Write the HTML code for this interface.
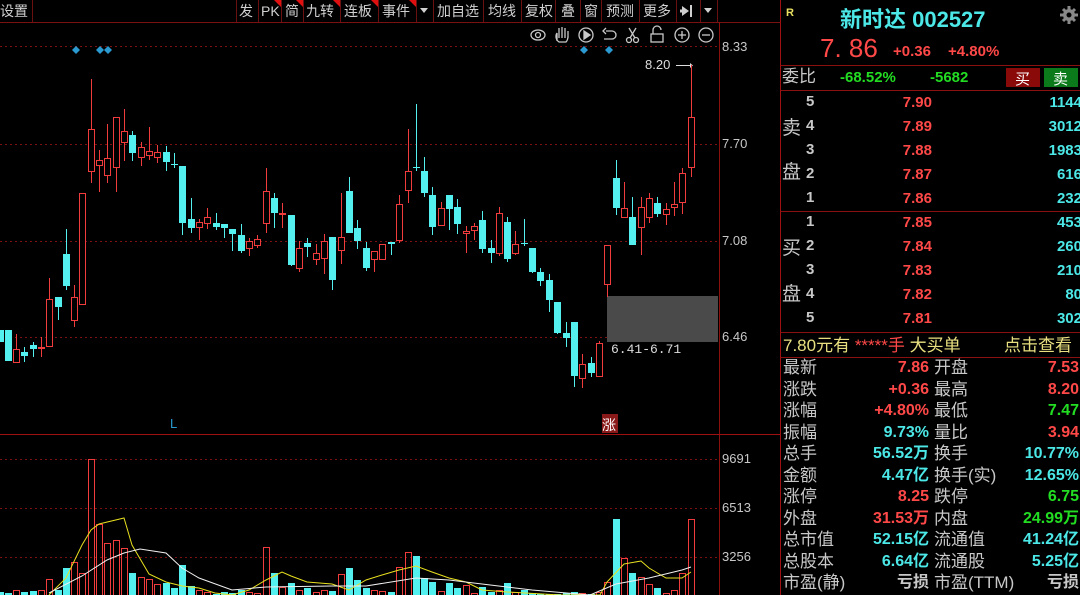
<!DOCTYPE html>
<html><head><meta charset="utf-8">
<style>
*{margin:0;padding:0;box-sizing:border-box}
body{width:1080px;height:595px;background:#000;overflow:hidden;position:relative;font-family:"Liberation Sans","Noto Sans CJK SC",sans-serif;color:#c8c8c8}
.a{position:absolute;white-space:nowrap}
.tb{font-size:14px;color:#d0d0d0;top:2px;line-height:18px}
.r{color:#ff4848}.c{color:#4ce8e8}.g{color:#22dd22}.w{color:#c8c8c8}.y{color:#e8e080}
.lab{font-size:17px;line-height:20px}
.num{font-size:15px;line-height:20px;font-weight:bold;text-align:right}
.ax{font-size:13px;left:722px}
</style></head><body>
<svg class="a" style="left:0;top:0" width="1080" height="595">
 <line x1="0" y1="22.5" x2="780" y2="22.5" stroke="#7a1010"/>
 <g stroke="#6a1010">
 <line x1="32.5" y1="0" x2="32.5" y2="22"/>
 <line x1="236.5" y1="0" x2="236.5" y2="22"/><line x1="258.5" y1="0" x2="258.5" y2="22"/><line x1="281.5" y1="0" x2="281.5" y2="22"/><line x1="303.5" y1="0" x2="303.5" y2="22"/><line x1="340.5" y1="0" x2="340.5" y2="22"/><line x1="378.5" y1="0" x2="378.5" y2="22"/><line x1="416.5" y1="0" x2="416.5" y2="22"/><line x1="433.5" y1="0" x2="433.5" y2="22"/><line x1="483.5" y1="0" x2="483.5" y2="22"/><line x1="521.5" y1="0" x2="521.5" y2="22"/><line x1="555.5" y1="0" x2="555.5" y2="22"/><line x1="580.5" y1="0" x2="580.5" y2="22"/><line x1="601.5" y1="0" x2="601.5" y2="22"/><line x1="639.5" y1="0" x2="639.5" y2="22"/><line x1="676.5" y1="0" x2="676.5" y2="22"/><line x1="700.5" y1="0" x2="700.5" y2="22"/><line x1="717.5" y1="0" x2="717.5" y2="22"/>
 </g>
 <g fill="#e01010">
 <polygon points="274,0 281,0 281,7"/><polygon points="296,0 303,0 303,7"/><polygon points="333,0 340,0 340,7"/><polygon points="371,0 378,0 378,7"/><polygon points="409,0 416,0 416,7"/>
 </g>
 <g fill="#d0d0d0"><polygon points="420,8 428,8 424,13"/><polygon points="704,8 712,8 708,13"/>
 <polygon points="682,6 689,11 682,16"/><rect x="690" y="5" width="2" height="12"/><rect x="680" y="9.5" width="4" height="3"/></g>
 <line x1="719.5" y1="22" x2="719.5" y2="595" stroke="#8a1010"/>
 <line x1="780.5" y1="0" x2="780.5" y2="595" stroke="#a01010"/>
 <line x1="0" y1="434.5" x2="780" y2="434.5" stroke="#a01010"/>
 <g stroke="#7a1010" stroke-dasharray="2,3">
 <line x1="0" y1="46.5" x2="719" y2="46.5"/><line x1="0" y1="144.5" x2="719" y2="144.5"/><line x1="0" y1="241.5" x2="719" y2="241.5"/><line x1="0" y1="337.5" x2="719" y2="337.5"/>
 <line x1="0" y1="459.5" x2="719" y2="459.5"/><line x1="0" y1="508.5" x2="719" y2="508.5"/><line x1="0" y1="557.5" x2="719" y2="557.5"/>
 </g>
 <g stroke="#c8c8c8" fill="none" stroke-width="1.3">
 <ellipse cx="538" cy="35" rx="7" ry="5"/><circle cx="538" cy="35" r="2.5"/>
 <path d="M557 41 L557 33 M559 38 V28 M562 38 V27 M565 38 V28 M568 38 V31 M557 33 C555 36 556 40 559 42 H566 C568 40 568 38 568 36"/>
 <circle cx="586" cy="35" r="7"/><path d="M584 31 L590 35 L584 39 Z" fill="#c8c8c8"/>
 <path d="M606 31 H612 A4 4 0 0 1 612 39 H604 M606 28 L603 31 L606 34"/>
 <circle cx="629" cy="40" r="2.5"/><circle cx="636" cy="40" r="2.5"/><path d="M630 38 L636 28 M635 38 L629 28"/>
 <rect x="651" y="34" width="12" height="8"/><path d="M653 34 V30 A4 4 0 0 1 661 30"/>
 <circle cx="682" cy="35" r="7"/><path d="M678 35 H686 M682 31 V39"/>
 <circle cx="706" cy="35" r="7"/><path d="M702 35 H710"/>
 </g>
 <g fill="#2a9ad0">
 <polygon points="76,46 80,50 76,54 72,50"/><polygon points="100,46 104,50 100,54 96,50"/><polygon points="108,46 112,50 108,54 104,50"/><polygon points="584,46 588,50 584,54 580,50"/><polygon points="609,46 613,50 609,54 605,50"/>
 </g>
 <rect x="607" y="296" width="111" height="46" fill="#4a4a4a"/>
 <line x1="676" y1="65.5" x2="690" y2="65.5" stroke="#ddd"/>
 <polygon points="690,63 693,65.5 690,68" fill="#ddd"/>
 <g id="cd"></g>
 <g id="vol"></g>
 <polyline fill="none" stroke="#e8e020" stroke-width="1" points="49,595 66,578 82,545 91,530 99,524 124,518 132,545 149,574 166,582 182,586 199,588 215,593 232,595 249,590 266,580 282,572 291,576 307,582 332,584 349,590 366,580 382,575 399,570 416,566 432,572 449,578 466,582 482,590 507,592 560,595 600,595 607,582 624,564 641,561 649,568 666,578 682,578 691,572"/>
 <polyline fill="none" stroke="#f0f0f0" stroke-width="1" points="49,593 82,576 107,560 124,553 140,549 166,553 182,568 199,578 232,590 266,587 332,586 366,586 416,578 449,580 482,584 532,590 590,595 616,584 649,578 682,570 691,567"/>
 <rect x="602" y="414" width="16" height="19" fill="#8a1a1a"/>
</svg>
<script>
var C=[[0,'c',330,342,330,342],[8,'c',330,361,330,361],[16,'r',349,362,334,363],[24,'c',352,356,347,362],[33,'c',345,349,342,357],[41,'r',347,348,337,357],[49,'r',299,346,278,346],[58,'c',297,307,297,320],[66,'c',254,286,229,290],[74,'r',297,320,285,327],[82,'r',193,304,193,304],[91,'r',129,171,79,183],[99,'r',160,165,150,192],[107,'r',158,175,124,183],[116,'r',117,167,117,192],[124,'r',131,142,109,161],[132,'c',135,153,131,161],[141,'r',147,157,142,166],[149,'r',151,155,127,160],[157,'r',152,157,145,163],[166,'c',152,162,146,171],[174,'c',164,165,153,168],[182,'c',166,223,166,235],[191,'c',219,228,198,233],[199,'r',222,227,219,240],[207,'r',217,223,208,229],[216,'c',223,227,213,230],[224,'c',224,228,224,238],[232,'c',229,234,229,251],[241,'c',235,251,224,253],[249,'r',241,248,238,256],[257,'r',239,245,235,248],[266,'r',191,223,168,233],[274,'c',198,213,193,228],[282,'r',213,214,203,228],[291,'c',215,265,215,266],[299,'r',248,268,241,272],[307,'c',243,247,238,257],[316,'r',253,259,244,265],[324,'r',241,258,234,274],[332,'c',237,280,237,290],[341,'r',237,250,193,264],[349,'c',191,233,177,233],[357,'c',228,241,220,249],[366,'c',248,268,242,271],[374,'r',251,259,251,272],[382,'r',244,259,244,259],[391,'c',242,244,242,255],[399,'r',204,240,195,243],[408,'r',171,190,129,203],[416,'c',167,168,104,171],[424,'c',171,193,157,197],[432,'c',195,227,187,235],[441,'r',208,225,202,225],[449,'c',195,209,195,230],[457,'c',207,224,199,234],[466,'r',231,233,226,253],[474,'r',226,230,223,240],[482,'c',220,249,211,253],[491,'c',248,253,240,263],[499,'r',213,253,207,256],[507,'c',222,259,217,262],[515,'r',244,253,231,255],[524,'c',243,244,219,246],[532,'c',248,272,248,273],[540,'c',272,281,268,286],[549,'c',280,300,274,312],[557,'c',302,333,302,334],[566,'c',333,338,322,347],[574,'c',322,376,322,387],[582,'r',364,378,354,388],[591,'c',363,373,357,377],[599,'r',343,376,341,376],[607,'r',245,284,245,297],[616,'c',178,208,160,215],[624,'r',208,217,182,218],[632,'c',217,245,197,245],[641,'r',207,227,197,255],[649,'r',198,217,193,223],[657,'c',203,214,197,217],[666,'r',209,214,203,225],[674,'r',204,207,182,216],[682,'r',173,202,168,214],[691,'r',117,167,65,177]];
var V={8:593,16:590,24:592,33:591,41:590,49:579,58:590,66:568,74:562,82:573,91:459,99:524,107:543,116:540,124:548,132:573,141:577,149:579,157:584,166:583,174:588,182:565,191:586,199:590,207:592,216:594,224:592,232:593,241:590,249:592,257:593,266:547,274:573,282:587,291:583,299:590,307:588,316:592,324:590,332:591,341:574,349:568,357:580,366:588,374:590,382:591,391:592,399:567,408:552,416:556,424:578,432:582,441:591,449:583,457:588,466:585,474:593,482:587,491:592,499:590,507:583,515:592,524:590,532:593,540:594,549:594,557:594,566:593,574:592,582:593,591:594,599:592,607:582,616:519,624:558,632:573,641:577,649:584,657:588,666:593,674:590,682:573,691:519};
var h='',v='',R='#f03c3c',Q='#54f0f0';
C.forEach(function(k){var x=k[0],col=k[1]=='r'?R:Q,t=k[2],b=k[3];if(b-t<1)b=t+1;
h+='<line x1="'+(x+.5)+'" y1="'+k[4]+'" x2="'+(x+.5)+'" y2="'+k[5]+'" stroke="'+col+'"/>';
if(k[1]=='r')h+='<rect x="'+(x-2.5)+'" y="'+(t+.5)+'" width="6" height="'+(b-t)+'" fill="#000" stroke="'+col+'"/>';
else h+='<rect x="'+(x-3)+'" y="'+t+'" width="7" height="'+(b-t)+'" fill="'+col+'"/>';
var vt=V[x]||592;
if(k[1]=='r')v+='<rect x="'+(x-2.5)+'" y="'+(vt+.5)+'" width="6" height="'+(600-vt)+'" fill="none" stroke="'+col+'"/>';
else v+='<rect x="'+(x-3)+'" y="'+vt+'" width="7" height="'+(600-vt)+'" fill="'+col+'"/>';});
document.getElementById('cd').innerHTML=h;document.getElementById('vol').innerHTML=v;
</script>
<div class="a tb" style="left:0px">设置</div>
<div class="a tb" style="left:239px">发</div>
<div class="a tb" style="left:261px">PK</div>
<div class="a tb" style="left:285px">简</div>
<div class="a tb" style="left:306px">九转</div>
<div class="a tb" style="left:344px">连板</div>
<div class="a tb" style="left:382px">事件</div>
<div class="a tb" style="left:437px">加自选</div>
<div class="a tb" style="left:488px">均线</div>
<div class="a tb" style="left:525px">复权</div>
<div class="a tb" style="left:561px">叠</div>
<div class="a tb" style="left:584px">窗</div>
<div class="a tb" style="left:606px">预测</div>
<div class="a tb" style="left:643px">更多</div>
<div class="a w ax" style="top:39px">8.33</div>
<div class="a w ax" style="top:136px">7.70</div>
<div class="a w ax" style="top:233px">7.08</div>
<div class="a w ax" style="top:329px">6.46</div>
<div class="a w ax" style="top:451px">9691</div>
<div class="a w ax" style="top:500px">6513</div>
<div class="a w ax" style="top:549px">3256</div>
<div class="a" style="left:645px;top:57px;font-size:13px;color:#ddd">8.20</div>
<div class="a" style="left:611px;top:342px;font-size:13px;color:#ddd;font-family:'Liberation Mono',monospace">6.41-6.71</div>
<div class="a" style="left:170px;top:416px;font-size:13px;color:#2a9ad0">L</div>
<div class="a" style="left:602px;top:415px;font-size:14px;color:#fff">涨</div>
<svg class="a" style="left:781px;top:0" width="299" height="595">
 <g stroke="#8a1010"><line x1="0" y1="65.5" x2="299" y2="65.5"/><line x1="0" y1="90.5" x2="299" y2="90.5"/><line x1="0" y1="211.5" x2="299" y2="211.5"/><line x1="0" y1="332.5" x2="299" y2="332.5"/><line x1="0" y1="357.5" x2="299" y2="357.5"/></g>
 <rect x="225" y="68" width="34" height="19" fill="#8a0a0a"/><rect x="263" y="68" width="34" height="19" fill="#0a7a1a"/>
 <g fill="#888"><circle cx="288" cy="15" r="6"/><g stroke="#888" stroke-width="3"><line x1="288" y1="6" x2="288" y2="24"/><line x1="279" y1="15" x2="297" y2="15"/><line x1="282" y1="9" x2="294" y2="21"/><line x1="294" y1="9" x2="282" y2="21"/></g><circle cx="288" cy="15" r="2.5" fill="#000"/></g>
</svg>
<div class="a" style="left:786px;top:7px;font-size:11px;font-weight:bold;color:#e8e060">R</div>
<div class="a c" style="left:840px;top:2px;font-size:22px;font-weight:bold">新时达 002527</div>
<div class="a r" style="left:820px;top:33px;font-size:26px">7. 86</div>
<div class="a r" style="left:893px;top:43px;font-size:15px;font-weight:bold">+0.36</div>
<div class="a r" style="left:948px;top:43px;font-size:15px;font-weight:bold">+4.80%</div>
<div class="a lab w" style="left:782px;top:67px">委比</div>
<div class="a g" style="left:840px;top:69px;font-size:15px;font-weight:bold">-68.52%</div>
<div class="a g" style="left:930px;top:69px;font-size:15px;font-weight:bold">-5682</div>
<div class="a" style="left:1015px;top:68px;font-size:15px;color:#fff">买</div>
<div class="a" style="left:1053px;top:68px;font-size:15px;color:#fff">卖</div>
<div class="a lab w" style="left:782px;top:119px;font-size:19px">卖</div>
<div class="a lab w" style="left:782px;top:163px;font-size:19px">盘</div>
<div class="a lab w" style="left:782px;top:239px;font-size:19px">买</div>
<div class="a lab w" style="left:782px;top:285px;font-size:19px">盘</div>
<div id="ob"></div>
<script>
var rows=[[103,'5','7.90','1144'],[127,'4','7.89','3012'],[151,'3','7.88','1983'],[175,'2','7.87','616'],[199,'1','7.86','232'],[223,'1','7.85','453'],[247,'2','7.84','260'],[271,'3','7.83','210'],[295,'4','7.82','80'],[319,'5','7.81','302']];
var s='';rows.forEach(function(r){var t=r[0]-10;
s+='<div class="a w" style="left:806px;top:'+t+'px;font-size:15px;font-weight:bold">'+r[1]+'</div>';
s+='<div class="a num r" style="left:860px;width:72px;top:'+t+'px">'+r[2]+'</div>';
s+='<div class="a num c" style="left:1000px;width:82px;top:'+t+'px">'+r[3]+'</div>';});
document.getElementById('ob').innerHTML=s;
</script>
<div class="a y lab" style="left:783px;top:336px">7.80元有 <span class="r">*****手</span> 大买单</div>
<div class="a y lab" style="left:1004px;top:336px">点击查看</div>
<div id="st"></div>
<script>
var S=[['最新','7.86','r','开盘','7.53','r'],['涨跌','+0.36','r','最高','8.20','r'],['涨幅','+4.80%','r','最低','7.47','g'],['振幅','9.73%','c','量比','3.94','r'],['总手','56.52万','c','换手','10.77%','c'],['金额','4.47亿','c','换手(实)','12.65%','c'],['涨停','8.25','r','跌停','6.75','g'],['外盘','31.53万','r','内盘','24.99万','g'],['总市值','52.15亿','c','流通值','41.24亿','c'],['总股本','6.64亿','c','流通股','5.25亿','c'],['市盈(静)','亏损','w','市盈(TTM)','亏损','w']];
var q='';S.forEach(function(r,i){var t=358+i*21.5;
q+='<div class="a lab w" style="left:783px;top:'+t+'px">'+r[0]+'</div>';
q+='<div class="a num '+r[2]+'" style="left:830px;width:99px;top:'+t+'px;font-size:16px">'+r[1]+'</div>';
q+='<div class="a lab w" style="left:934px;top:'+t+'px">'+r[3]+'</div>';
q+='<div class="a num '+r[5]+'" style="left:980px;width:99px;top:'+t+'px;font-size:16px">'+r[4]+'</div>';});
document.getElementById('st').innerHTML=q;
</script>
</body></html>
